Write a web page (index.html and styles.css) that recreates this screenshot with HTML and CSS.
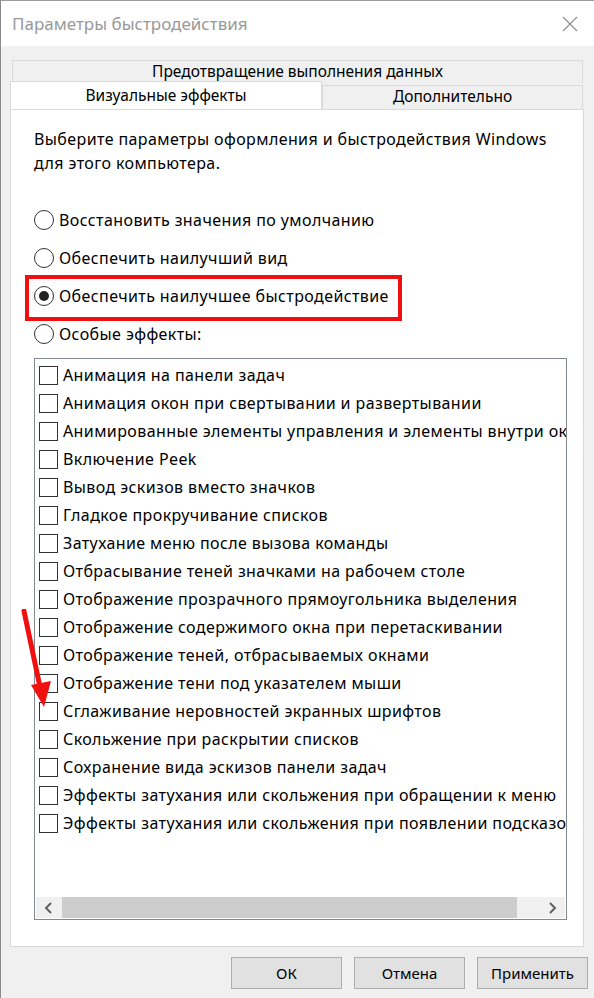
FILE: index.html
```html
<!DOCTYPE html>
<html lang="ru">
<head>
  <meta charset="UTF-8">
  <meta name="viewport" content="width=device-width, initial-scale=1.0">
  <title>Параметры быстродействия</title>
  <link rel="stylesheet" href="styles.css">
</head>
<body>
  <div class="window">
    <!-- Title bar -->
    <div class="titlebar">
      <span class="title">Параметры быстродействия</span>
      <svg class="close" width="16" height="16" viewBox="0 0 16 16">
        <path d="M1 1 L15 15 M15 1 L1 15" stroke="#8c8c8c" stroke-width="1.1" fill="none"/>
      </svg>
    </div>

    <div class="content">
      <!-- Tabs -->
      <div class="tabs">
        <div class="tab-row back">
          <div class="tab">Предотвращение выполнения данных</div>
        </div>
        <div class="tab-row front">
          <div class="tab active">Визуальные эффекты</div>
          <div class="tab">Дополнительно</div>
        </div>
      </div>

      <!-- Visual effects panel -->
      <div class="panel">
        <p class="intro">Выберите параметры оформления и быстродействия Windows для этого компьютера.</p>

        <div class="radios">
          <div class="radio"><span class="dot"></span>Восстановить значения по умолчанию</div>
          <div class="radio"><span class="dot"></span>Обеспечить наилучший вид</div>
          <div class="radio checked marked"><span class="dot"></span>Обеспечить наилучшее быстродействие</div>
          <div class="radio"><span class="dot"></span>Особые эффекты:</div>
        </div>

        <div class="listbox">
          <div class="items">
            <div class="item"><span class="box"></span>Анимация на панели задач</div>
            <div class="item"><span class="box"></span>Анимация окон при свертывании и развертывании</div>
            <div class="item"><span class="box"></span>Анимированные элементы управления и элементы внутри окна</div>
            <div class="item"><span class="box"></span>Включение Peek</div>
            <div class="item"><span class="box"></span>Вывод эскизов вместо значков</div>
            <div class="item"><span class="box"></span>Гладкое прокручивание списков</div>
            <div class="item"><span class="box"></span>Затухание меню после вызова команды</div>
            <div class="item"><span class="box"></span>Отбрасывание теней значками на рабочем столе</div>
            <div class="item"><span class="box"></span>Отображение прозрачного прямоугольника выделения</div>
            <div class="item"><span class="box"></span>Отображение содержимого окна при перетаскивании</div>
            <div class="item"><span class="box"></span>Отображение теней, отбрасываемых окнами</div>
            <div class="item"><span class="box"></span>Отображение тени под указателем мыши</div>
            <div class="item"><span class="box"></span>Сглаживание неровностей экранных шрифтов</div>
            <div class="item"><span class="box"></span>Скольжение при раскрытии списков</div>
            <div class="item"><span class="box"></span>Сохранение вида эскизов панели задач</div>
            <div class="item"><span class="box"></span>Эффекты затухания или скольжения при обращении к меню</div>
            <div class="item"><span class="box"></span>Эффекты затухания или скольжения при появлении подсказок</div>
          </div>
          <div class="hscroll">
            <svg class="arrow" width="20" height="20" viewBox="0 0 20 20">
              <path d="M12 5 L7 10 L12 15" stroke="#606060" stroke-width="2" fill="none"/>
            </svg>
            <div class="track"><div class="thumb"></div></div>
            <svg class="arrow" width="20" height="20" viewBox="0 0 20 20">
              <path d="M8 5 L13 10 L8 15" stroke="#606060" stroke-width="2" fill="none"/>
            </svg>
          </div>
        </div>
      </div>

      <!-- Dialog buttons -->
      <div class="buttons">
        <button class="btn">ОК</button>
        <button class="btn">Отмена</button>
        <button class="btn">Применить</button>
      </div>
    </div>

    <!-- Red annotation arrow -->
    <svg class="annot-arrow" width="60" height="110" viewBox="0 0 60 110">
      <path d="M23 2 L39 78" stroke="#f01010" stroke-width="5" stroke-linecap="round" fill="none"/>
      <path d="M30 76 L50 72 L43 98 Z" fill="#f01010"/>
    </svg>
  </div>
</body>
</html>
```

FILE: styles.css
```css
body {
  margin: 0;
  padding: 0;
  background-color: #f0f0f0;
  font-family: "Noto Sans", "Segoe UI", sans-serif;
  font-size: 16px;
  letter-spacing: 0.4px;
  color: #000;
}

.window {
  position: relative;
  width: 594px;
  height: 998px;
  box-sizing: border-box;
  border-top: 1px solid #9a9a9a;
  border-left: 1px solid #8a8a8a;
  background-color: #f0f0f0;
  overflow: hidden;
}


.titlebar {
  height: 45px;
  background-color: #fff;
  display: flex;
  align-items: center;
  justify-content: space-between;
  padding: 0 16px 0 11px;
}

.title {
  color: #999;
  font-size: 17px;
  letter-spacing: 0;
}

.close {
  margin-top: 1px;
}


.content {
  padding: 14px 10px 0 9px;
}

.tab-row {
  display: flex;
}

.tab {
  box-sizing: border-box;
  text-align: center;
  background-color: #f0f0f0;
  border: 1px solid #d9d9d9;
  line-height: 21px;
  font-size: 15.5px;
  letter-spacing: 0;
}

.back .tab {
  flex: 1;
  margin: 0 1px 0 2px;
  height: 23px;
  border-bottom: none;
}

.front {
  height: 26px;
  align-items: flex-end;
}

.front .tab {
  height: 24px;
  border-bottom: none;
  flex: 1;
  margin-right: 1px;
}

.front .tab.active {
  flex: none;
  width: 312px;
  height: 28px;
  margin-top: -2px;
  margin-right: 0;
  background-color: #fff;
  position: relative;
  z-index: 1;
  line-height: 26px;
}


.panel {
  height: 838px;
  box-sizing: border-box;
  background-color: #fff;
  border: 1px solid #d9d9d9;
  padding: 17px 16px 0 23px;
}

.intro {
  margin: 0;
  line-height: 24px;
}

.radios {
  margin-top: 26px;
}

.radio {
  position: relative;
  display: flex;
  align-items: center;
  height: 38px;
  line-height: 22px;
}

.dot {
  width: 18px;
  height: 18px;
  border: 1px solid #333;
  border-radius: 50%;
  margin-right: 5px;
  box-sizing: content-box;
  display: flex;
  align-items: center;
  justify-content: center;
  flex: none;
}

.checked .dot::before {
  content: "";
  width: 10px;
  height: 10px;
  border-radius: 50%;
  background-color: #222;
}

.marked::after {
  content: "";
  position: absolute;
  left: -9px;
  top: -2px;
  width: 377px;
  height: 46px;
  box-sizing: border-box;
  border: 4px solid #f01010;
}


.listbox {
  margin-top: 5px;
  width: 533px;
  height: 562px;
  box-sizing: border-box;
  border: 1px solid #828790;
  display: flex;
  flex-direction: column;
}

.items {
  flex: 1;
  overflow: hidden;
  padding-top: 2px;
}

.item {
  display: flex;
  align-items: center;
  height: 28px;
  white-space: nowrap;
  padding-left: 4px;
}

.box {
  width: 17px;
  height: 17px;
  border: 1px solid #333;
  margin-right: 5px;
  flex: none;
}

.hscroll {
  display: flex;
  align-items: center;
  height: 21px;
  background-color: #f0f0f0;
  margin: 0 1px 1px 1px;
}

.arrow {
  flex: none;
  margin: 0 3px;
}

.track {
  flex: 1;
  height: 100%;
}

.thumb {
  height: 100%;
  width: 455px;
  background-color: #cdcdcd;
}


.buttons {
  display: flex;
  justify-content: flex-end;
  gap: 12px;
  margin-top: 10px;
  margin-right: -4px;
}

.btn {
  width: 111px;
  height: 32px;
  font-family: inherit;
  font-size: 15px;
  letter-spacing: 0;
  background-color: #e1e1e1;
  border: 1px solid #adadad;
  color: #000;
  padding: 0;
}


.annot-arrow {
  position: absolute;
  left: 0;
  top: 608px;
}
```
